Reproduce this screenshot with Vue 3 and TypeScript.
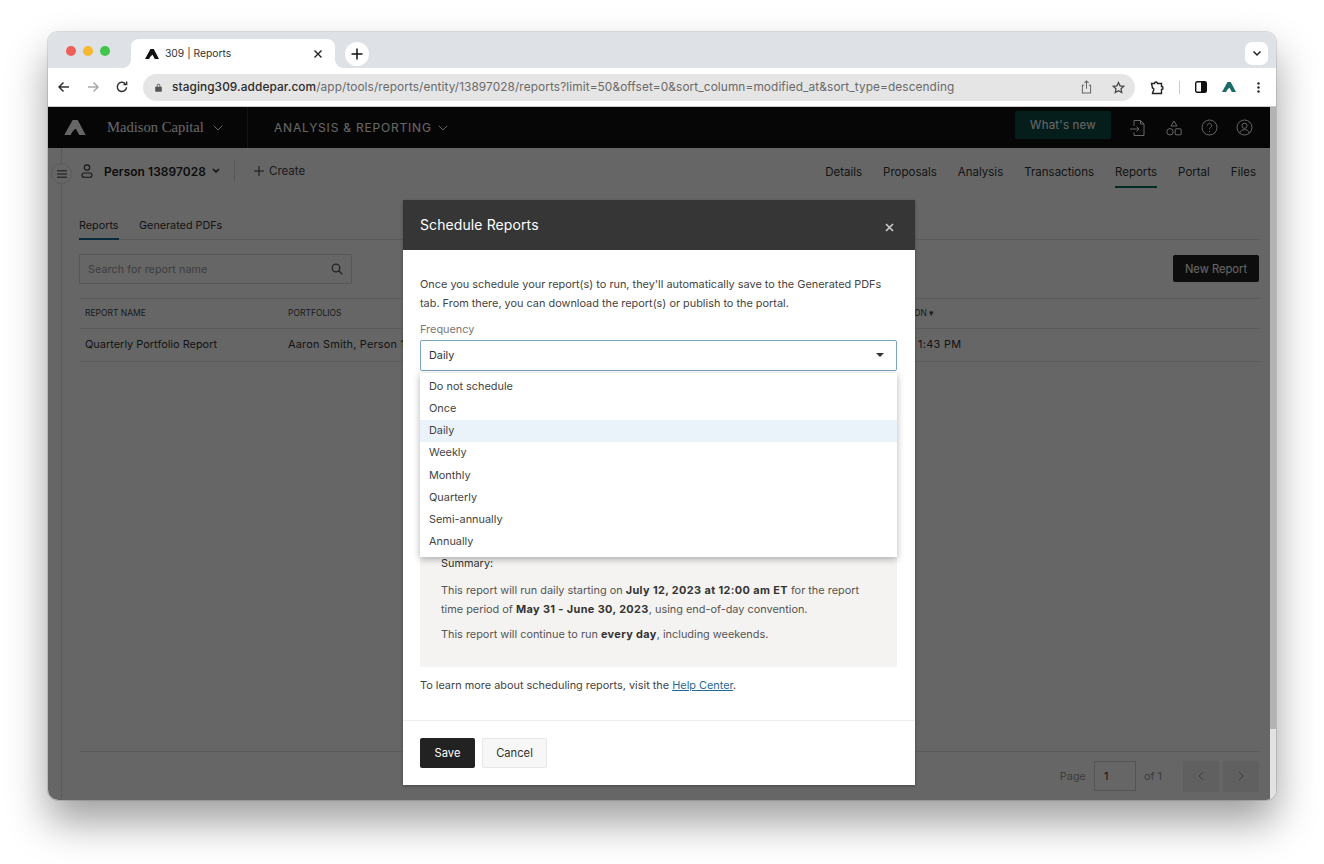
<template>
  <div class="desk">
    <div class="window">
      <div class="tabstrip">
        <div class="lights"><i class="red"></i><i class="amber"></i><i class="green"></i></div>
        <div class="tab">
          <svg class="tab-logo" width="14" height="10" viewBox="0 0 20 14"><path :d="logoPath" fill="#111"/></svg>
          <span class="tab-title">309 | Reports</span>
          <svg class="tab-x" width="10" height="10" viewBox="0 0 10 10" fill="none" stroke="#222" stroke-width="1.4"><path d="M1.5 1.5l7 7M8.5 1.5l-7 7"/></svg>
        </div>
        <div class="newtab">
          <svg width="12" height="12" viewBox="0 0 12 12" fill="none" stroke="#111" stroke-width="1.5"><path d="M6 .5v11M.5 6h11"/></svg>
        </div>
        <div class="tabmenu">
          <svg width="10" height="7" viewBox="0 0 10 7" fill="none" stroke="#222" stroke-width="1.5"><path d="M1.5 1.5L5 5l3.5-3.5"/></svg>
        </div>
      </div>

      <div class="toolbar">
        <svg class="nav-ic" width="14" height="14" viewBox="0 0 14 14" fill="none" stroke="#333" stroke-width="1.5"><path d="M12 7H2M6.5 2.500L2 7l4.500 4.500"/></svg>
        <svg class="nav-ic" width="14" height="14" viewBox="0 0 14 14" fill="none" stroke="#aaa" stroke-width="1.5"><path d="M2 7h10M7.500 2.500L12 7l-4.500 4.500"/></svg>
        <svg class="nav-ic" width="14" height="14" viewBox="0 0 14 14" fill="none" stroke="#333" stroke-width="1.5"><path d="M11.500 7.200a4.600 4.600 0 1 1-1.200-3.400"/><path d="M11.600 1.400v3.200H8.400"/></svg>
        <div class="omnibox">
          <svg width="7" height="9" viewBox="0 0 8 10"><path d="M1.900 4V2.800a2.100 2.100 0 0 1 4.200 0V4H7a.8.8 0 0 1 .8.8v4.200a.8.8 0 0 1-.8.8H1a.8.8 0 0 1-.8-.8V4.800a.8.8 0 0 1 .8-.8zM2.900 4h2.200V2.800a1.100 1.100 0 0 0-2.200 0z" fill="#555"/></svg>
          <span class="url"><b>staging309.addepar.com</b>/app/tools/reports/entity/13897028/reports?limit=50&amp;offset=0&amp;sort_column=modified_at&amp;sort_type=descending</span>
          <svg class="share" width="11" height="14" viewBox="0 0 12 15" fill="none" stroke="#666" stroke-width="1.100"><path d="M3.500 5.500H1.500v8.500h9V5.500h-2M6 9.500V1M3.800 3L6 1l2.200 2"/></svg>
          <svg class="star" width="13" height="13" viewBox="0 0 14 14" fill="none" stroke="#444" stroke-width="1.300"><path d="M7 1.500l1.700 3.700 4 .5-3 2.700.8 4L7 10.400l-3.500 2 .8-4-3-2.700 4-.5z"/></svg>
        </div>
        <svg class="ext" width="15" height="15" viewBox="0 0 15 15" fill="none" stroke="#222" stroke-width="1.400"><path d="M1.500 3.500h3a1.500 1.500 0 0 1 3 0h4v3a1.500 1.500 0 0 1 0 3v4h-9l.8-2.800a1.500 1.500 0 0 0-.8-2.700z"/></svg>
        <span class="tb-sep"></span>
        <svg class="panel" width="12" height="12" viewBox="0 0 12 12"><rect x=".7" y=".7" width="10.600" height="10.600" rx="1.500" fill="#fff" stroke="#111" stroke-width="1.400"/><path d="M6 1h4.500A.5.5 0 0 1 11 1.500v9a.5.5 0 0 1-.5.5H6z" fill="#111"/></svg>
        <svg class="tb-logo" width="14" height="10" viewBox="0 0 20 14"><path :d="logoPath" fill="#1d6b68"/></svg>
        <svg class="kebab" width="3" height="11" viewBox="0 0 3 11" fill="#222"><circle cx="1.500" cy="1.500" r="1.200"/><circle cx="1.500" cy="5.500" r="1.200"/><circle cx="1.500" cy="9.500" r="1.200"/></svg>
      </div>

      <div class="viewport">
        <div class="app">
          <div class="topnav">
            <div class="brand">
              <svg width="22" height="15" viewBox="0 0 20 14"><path :d="logoPath" fill="#fff"/></svg>
              <span class="firm">Madison Capital</span>
              <svg width="10" height="6" viewBox="0 0 10 6" fill="none" stroke="#fff" stroke-width="1"><path d="M.7.7L5 5l4.300-4.300"/></svg>
            </div>
            <div class="section">
              <span>ANALYSIS &amp; REPORTING</span>
              <svg width="10" height="6" viewBox="0 0 10 6" fill="none" stroke="#fff" stroke-width="1"><path d="M.7.7L5 5l4.300-4.300"/></svg>
            </div>
            <div class="top-right">
              <button class="whats-new">What's new</button>
              <svg width="18" height="18" viewBox="0 0 18 18" fill="none" stroke="#fff" stroke-width="1"><path d="M5 7V1.500h6.500L15 5v11.500H5v-3M11.500 1.500V5H15M1 10h9M7.500 7.500L10 10l-2.500 2.500"/></svg>
              <svg width="18" height="18" viewBox="0 0 18 18" fill="none" stroke="#fff" stroke-width="1"><path d="M9 2l3 5H6z"/><circle cx="5" cy="12.800" r="3.200"/><rect x="10.200" y="9.800" width="6" height="6" rx=".8"/></svg>
              <svg width="17" height="17" viewBox="0 0 17 17" fill="none" stroke="#fff" stroke-width="1"><circle cx="8.500" cy="8.500" r="7.500"/><path d="M6.300 6.600a2.200 2.200 0 1 1 3.400 1.900c-.8.500-1.200 1-1.200 1.900"/><path d="M8.500 12v1"/></svg>
              <svg width="17" height="17" viewBox="0 0 17 17" fill="none" stroke="#fff" stroke-width="1"><circle cx="8.500" cy="8.500" r="7.500"/><circle cx="8.500" cy="6.800" r="2.600"/><path d="M3.800 14c.5-2.300 2-3.300 4.700-3.300s4.200 1 4.700 3.300"/></svg>
            </div>
          </div>

          <div class="subnav">
            <div class="entity">
              <svg width="12" height="14" viewBox="0 0 12 14" fill="none" stroke="#333" stroke-width="1.100"><circle cx="6" cy="3.600" r="2.700"/><rect x="1" y="9" width="10" height="4.200" rx="2"/></svg>
              <b>Person 13897028</b>
              <svg width="8" height="6" viewBox="0 0 8 6" fill="none" stroke="#222" stroke-width="1.500"><path d="M1 1l3 3 3-3"/></svg>
            </div>
            <div class="create">
              <svg width="10" height="10" viewBox="0 0 10 10" fill="none" stroke="#333" stroke-width="1"><path d="M5 0v10M0 5h10"/></svg>
              <span>Create</span>
            </div>
            <nav class="entity-tabs">
              <a v-for="t in entityTabs" :key="t" :class="{ on: t === 'Reports' }">{{ t }}</a>
            </nav>
          </div>

          <div class="rail">
            <span class="rail-btn">
              <svg width="10" height="8" viewBox="0 0 10 8" fill="none" stroke="#333" stroke-width="1"><path d="M0 .8h10M0 4h10M0 7.200h10"/></svg>
            </span>
          </div>

          <main class="content">
            <div class="subtabs">
              <a class="on">Reports</a>
              <a>Generated PDFs</a>
            </div>
            <div class="actions">
              <div class="search">
                <span>Search for report name</span>
                <svg width="12" height="12" viewBox="0 0 12 12" fill="none" stroke="#555" stroke-width="1.300"><circle cx="5" cy="5" r="3.800"/><path d="M7.800 7.800l3.500 3.500"/></svg>
              </div>
              <button class="new-report">New Report</button>
            </div>
            <div class="grid-head">
              <span class="c1">REPORT NAME</span>
              <span class="c2">PORTFOLIOS</span>
              <span class="c3">ON ▾</span>
            </div>
            <div class="grid-row">
              <span class="c1">Quarterly Portfolio Report</span>
              <span class="c2">Aaron Smith, Person 13897028</span>
              <span class="c3">1:43 PM</span>
            </div>
            <div class="pager">
              <span>Page</span>
              <span class="page-input">1</span>
              <span>of 1</span>
              <span class="page-btn first"><svg width="6" height="10" viewBox="0 0 6 10" fill="none" stroke="#999" stroke-width="1"><path d="M5 1L1 5l4 4"/></svg></span>
              <span class="page-btn"><svg width="6" height="10" viewBox="0 0 6 10" fill="none" stroke="#999" stroke-width="1"><path d="M1 1l4 4-4 4"/></svg></span>
            </div>
          </main>
          <div class="scrim"></div>
        </div>
        <div class="scrollbar"><span></span></div>

        <section class="modal">
          <header class="modal-head">
            <h2>Schedule Reports</h2>
            <svg width="9" height="9" viewBox="0 0 9 9" fill="none" stroke="#ccc" stroke-width="1.600"><path d="M1 1l7 7M8 1L1 8"/></svg>
          </header>
          <div class="modal-body">
            <p class="intro">Once you schedule your report(s) to run, they'll automatically save to the Generated PDFs tab. From there, you can download the report(s) or publish to the portal.</p>
            <label class="field-label">Frequency</label>
            <div class="select">
              <span>Daily</span>
              <svg width="8" height="4" viewBox="0 0 8 4"><path d="M0 0h8L4 4z" fill="#333"/></svg>
            </div>
            <ul class="menu">
              <li v-for="f in frequencies" :key="f" :class="{ sel: f === 'Daily' }">{{ f }}</li>
            </ul>
            <div class="summary">
              <p class="sum-title">Summary:</p>
              <p>This report will run daily starting on <b>July 12, 2023 at 12:00 am ET</b> for the report time period of <b>May 31 - June 30, 2023</b>, using end-of-day convention.</p>
              <p>This report will continue to run <b>every day</b>, including weekends.</p>
            </div>
            <p class="help">To learn more about scheduling reports, visit the <a>Help Center</a>.</p>
          </div>
          <footer class="modal-foot">
            <button class="save">Save</button>
            <button class="cancel">Cancel</button>
          </footer>
        </section>
      </div>
    </div>
  </div>
</template>

<script setup lang="ts">
const logoPath = 'M0 14L7.800 0H12.500L20 14H14L10.800 8.200C8.800 9.200 7 11.500 6 14Z'

const entityTabs: string[] = ['Details', 'Proposals', 'Analysis', 'Transactions', 'Reports', 'Portal', 'Files']

const frequencies: string[] = [
  'Do not schedule',
  'Once',
  'Daily',
  'Weekly',
  'Monthly',
  'Quarterly',
  'Semi-annually',
  'Annually',
]
</script>

<style>
html, body { margin: 0; background: #fff; }
</style>

<style scoped>
.desk {
  position: relative;
  width: 1324px;
  height: 864px;
  padding: 32px 48px 0;
  box-sizing: border-box;
  overflow: hidden;
  background: #fff;
  font-family: Inter, "Liberation Sans", sans-serif;
}
.desk::before {
  content: "";
  position: absolute;
  left: 48px;
  top: 32px;
  width: 1228px;
  height: 768px;
  border-radius: 10px;
  box-shadow: 0 22px 40px rgba(0,0,0,.38);
}
.window {
  position: relative;
  width: 1228px;
  height: 768px;
  display: flex;
  flex-direction: column;
  border-radius: 10px;
  overflow: hidden;
  box-shadow: 0 0 0 1px rgba(0,0,0,.12);
}

.tabstrip {
  height: 36px;
  flex: none;
  background: #dee1e6;
  display: flex;
  align-items: flex-end;
  position: relative;
}
.lights { display: flex; gap: 7px; padding: 0 0 12px 18px; width: 65px; }
.lights i { width: 10px; height: 10px; border-radius: 50%; }
.red { background: #ed5f57; }
.amber { background: #f5b82e; }
.green { background: #3fc64b; }
.tab {
  position: relative;
  width: 204px;
  height: 29px;
  background: #fff;
  border-radius: 8px 8px 0 0;
  display: flex;
  align-items: center;
  box-sizing: border-box;
  padding: 0 12px 0 14px;
}
.tab::before, .tab::after {
  content: "";
  position: absolute;
  bottom: 0;
  width: 8px;
  height: 8px;
}
.tab::before { left: -8px; background: radial-gradient(circle at 0 0, #dee1e6 7.500px, #fff 8px); }
.tab::after { right: -8px; background: radial-gradient(circle at 100% 0, #dee1e6 7.500px, #fff 8px); }
.tab-title { font-size: 10.300px; color: #333; margin: -1px 0 0 6px; flex: 1; }
.newtab {
  width: 24px;
  height: 24px;
  border-radius: 50%;
  background: #fff;
  display: flex;
  align-items: center;
  justify-content: center;
  margin: 0 0 2px 10px;
}
.tabmenu {
  position: absolute;
  right: 8px;
  top: 10px;
  width: 23px;
  height: 23px;
  background: #fff;
  border-radius: 7px;
  display: flex;
  align-items: center;
  justify-content: center;
}

.toolbar {
  height: 39px;
  flex: none;
  background: #fff;
  display: flex;
  align-items: center;
  box-sizing: border-box;
  padding: 0 14px 0 9px;
  border-bottom: 1px solid #c9c9c9;
}
.nav-ic { margin-right: 15px; }
.omnibox {
  width: 992px;
  height: 27px;
  margin-left: -1px;
  border-radius: 14px;
  background: #e5e5e5;
  display: flex;
  align-items: center;
  box-sizing: border-box;
  padding: 0 10px 0 12px;
  flex: none;
}
.url { font-size: 11.830px; color: #6a6a6a; margin-left: 10px; flex: 1; white-space: nowrap; letter-spacing: .1px; }
.url b { font-weight: 500; color: #2a2a2a; }
.share { margin-right: 20px; }
.ext { margin-left: 15px; }
.tb-sep { width: 1px; height: 13px; background: #ccc; margin: 0 15px 0 14px; }
.tb-logo { margin-left: 15px; }
.kebab { margin-left: 21px; }

.viewport {
  flex: 1;
  position: relative;
  display: flex;
  min-height: 0;
}
.app {
  flex: 1;
  min-width: 0;
  background: #fff;
  display: flex;
  flex-direction: column;
  position: relative;
}
.scrollbar {
  width: 6px;
  flex: none;
  background: #e2e2e2;
  display: flex;
  flex-direction: column;
}
.scrollbar span { display: block; height: 622px; background: #b4b4b4; }
.scrim {
  position: absolute;
  inset: 0;
  background: rgba(0,0,0,.6);
}

.topnav {
  height: 41px;
  flex: none;
  background: #111;
  display: flex;
  align-items: center;
  color: #fff;
}
.brand {
  width: 200px;
  height: 100%;
  box-sizing: border-box;
  padding-left: 16px;
  display: flex;
  align-items: center;
  border-right: 1px solid #333;
}
.firm {
  font-family: "Liberation Serif", serif;
  font-size: 14.600px;
  margin: 0 9px 0 21px;
}
.section {
  margin-left: 26px;
  display: flex;
  align-items: center;
  gap: 6px;
  font-size: 12px;
  letter-spacing: .8px;
  font-weight: 400;
}
.top-right {
  margin-left: auto;
  display: flex;
  align-items: center;
  gap: 18px;
  padding-right: 17px;
}
.whats-new {
  width: 96px;
  height: 28px;
  margin-top: -5px;
  border: 0;
  border-radius: 2px;
  background: #0e4d46;
  color: #fff;
  font: 400 11.500px Inter, sans-serif;
  letter-spacing: .2px;
}

.subnav {
  height: 46px;
  flex: none;
  display: flex;
  align-items: center;
  box-sizing: border-box;
  padding: 0 14px 0 33px;
  font-size: 12px;
  color: #333;
}
.entity {
  display: flex;
  align-items: center;
  gap: 11px;
  padding-right: 14px;
  border-right: 1px solid #ddd;
  height: 22px;
}
.entity b { font-weight: 600; font-size: 11.900px; color: #222; letter-spacing: .1px; }
.entity svg:last-child { margin-left: -5px; }
.create {
  display: flex;
  align-items: center;
  gap: 5px;
  margin-left: 19px;
  font-size: 11.500px;
  color: #444;
}
.entity-tabs {
  margin-left: auto;
  display: flex;
  gap: 21px;
  height: 100%;
}
.entity-tabs a {
  font-size: 11.500px;
  color: #333;
  height: 100%;
  display: flex;
  align-items: center;
  box-sizing: border-box;
  padding-top: 1px;
  position: relative;
}
.entity-tabs a.on::after {
  content: "";
  position: absolute;
  left: 0;
  right: 0;
  bottom: 6px;
  height: 2px;
  background: #0e6a60;
}

.rail {
  position: absolute;
  left: 0;
  top: 41px;
  bottom: 0;
  width: 14px;
  box-sizing: border-box;
  border-right: 1px solid #e0e0e0;
}
.rail-btn {
  position: absolute;
  left: 3px;
  top: 15px;
  width: 21px;
  height: 21px;
  border-radius: 50%;
  background: #fff;
  border: 1px solid #e0e0e0;
  box-sizing: border-box;
  display: flex;
  align-items: center;
  justify-content: center;
}

.content {
  flex: 1;
  min-height: 0;
  display: flex;
  flex-direction: column;
  margin: 0 11px 0 31px;
}
.subtabs {
  display: flex;
  gap: 20.500px;
  height: 46px;
  flex: none;
  box-sizing: border-box;
  align-items: flex-start;
  padding-top: 25px;
  border-bottom: 1px solid #e2e2e2;
  font-size: 10.800px;
  color: #333;
}
.subtabs a { position: relative; height: 21px; }
.subtabs a.on::after {
  content: "";
  position: absolute;
  left: 0;
  right: 0;
  bottom: 0;
  height: 2px;
  background: #1a6c96;
}
.actions {
  display: flex;
  justify-content: space-between;
  align-items: flex-start;
  padding-top: 14px;
  flex: none;
}
.search {
  width: 273px;
  height: 30px;
  box-sizing: border-box;
  border: 1px solid #d6d6d6;
  display: flex;
  align-items: center;
  justify-content: space-between;
  padding: 0 8px 0 8px;
  font-size: 10.700px;
  color: #9a9a9a;
  letter-spacing: .1px;
  border-radius: 1px;
}
.new-report {
  width: 86px;
  height: 27px;
  margin-top: 1px;
  border: 0;
  background: #222;
  color: #fff;
  font: 400 11.200px Inter, sans-serif;
  border-radius: 2px;
}
.grid-head, .grid-row {
  display: flex;
  align-items: center;
  flex: none;
  padding-left: 6px;
  padding-bottom: 2px;
}
.grid-head {
  margin-top: 14px;
  height: 31px;
  box-sizing: border-box;
  border-top: 1px solid #e2e2e2;
  border-bottom: 1px solid #e2e2e2;
  font-size: 8.500px;
  color: #444;
}
.grid-row {
  height: 33px;
  box-sizing: border-box;
  border-bottom: 1px solid #e2e2e2;
  font-size: 10.950px;
  color: #333;
}
.c1 { width: 203px; flex: none; }
.c2 { width: 626px; flex: none; }
.c3 { flex: none; }
.grid-row .c2 { letter-spacing: .2px; }
.grid-row .c3 { padding-left: 4px; letter-spacing: .3px; }

.pager {
  margin-top: auto;
  height: 48px;
  flex: none;
  border-top: 1px solid #e2e2e2;
  display: flex;
  align-items: center;
  justify-content: flex-end;
  font-size: 10.900px;
  color: #999;
}
.page-input {
  width: 42px;
  height: 30px;
  box-sizing: border-box;
  border: 1px solid #cfcfcf;
  margin: 0 8px;
  display: flex;
  align-items: center;
  padding-left: 9px;
  color: #333;
}
.page-btn {
  width: 36px;
  height: 31px;
  background: #f0f0f0;
  display: flex;
  align-items: center;
  justify-content: center;
  margin-left: 4px;
}
.page-btn.first { margin-left: 21px; }

.modal {
  position: absolute;
  left: 355px;
  top: 93px;
  width: 512px;
  height: 585px;
  background: #fff;
  display: flex;
  flex-direction: column;
  box-shadow: 0 1px 3px rgba(0,0,0,.3);
}
.modal-head {
  height: 50px;
  flex: none;
  background: #363636;
  display: flex;
  align-items: center;
  justify-content: space-between;
  padding: 0 21px 0 17px;
}
.modal-head h2 {
  margin: -2px 0 0;
  font-size: 14px;
  font-weight: 400;
  color: #fff;
  letter-spacing: .1px;
}
.modal-head svg { margin-top: 5px; }
.modal-body {
  flex: 1;
  position: relative;
  padding: 25px 18px 0 17px;
  min-height: 0;
  font-size: 10.900px;
  color: #444;
}
.intro {
  margin: 0;
  line-height: 19px;
}
.field-label {
  display: block;
  margin-top: 7px;
  height: 20px;
  line-height: 19px;
  color: #777;
}
.select {
  height: 31px;
  box-sizing: border-box;
  border: 1px solid #7aa3bd;
  border-radius: 2px;
  display: flex;
  align-items: center;
  justify-content: space-between;
  padding: 0 12px 2px 8px;
  color: #333;
}
.menu {
  position: absolute;
  left: 17px;
  right: 18px;
  top: 123px;
  margin: 0;
  padding: 3px 0 4px;
  list-style: none;
  background: #fff;
  z-index: 2;
  box-shadow: 0 2px 7px rgba(0,0,0,.3);
}
.menu li {
  height: 22.150px;
  line-height: 20.500px;
  padding-left: 9px;
  color: #444;
}
.menu li.sel { background: #eaf3f9; }
.summary {
  margin-top: 177px;
  height: 119px;
  padding: 0 21px;
  background: #f4f3f1;
  border-radius: 2px;
  line-height: 19px;
  color: #555;
}
.summary p { margin: 0 0 6px; }
.summary b { color: #333; font-weight: 700; letter-spacing: .38px; }
.summary .sum-title {
  margin: 0 0 8px;
  padding-top: 6px;
  color: #333;
}
.help { margin: 9px 0 0; line-height: 19px; color: #444; }
.help a { color: #1f6a96; text-decoration: underline; }
.modal-foot {
  height: 65px;
  flex: none;
  border-top: 1px solid #ececec;
  box-sizing: border-box;
  display: flex;
  align-items: center;
  gap: 7px;
  padding-left: 17px;
}
.modal-foot button {
  height: 30px;
  border-radius: 2px;
  font: 400 11.200px Inter, sans-serif;
}
.save { width: 55px; border: 0; background: #222; color: #fff; }
.cancel { width: 65px; border: 1px solid #e8e8e8; background: #f7f7f7; color: #333; }
</style>
